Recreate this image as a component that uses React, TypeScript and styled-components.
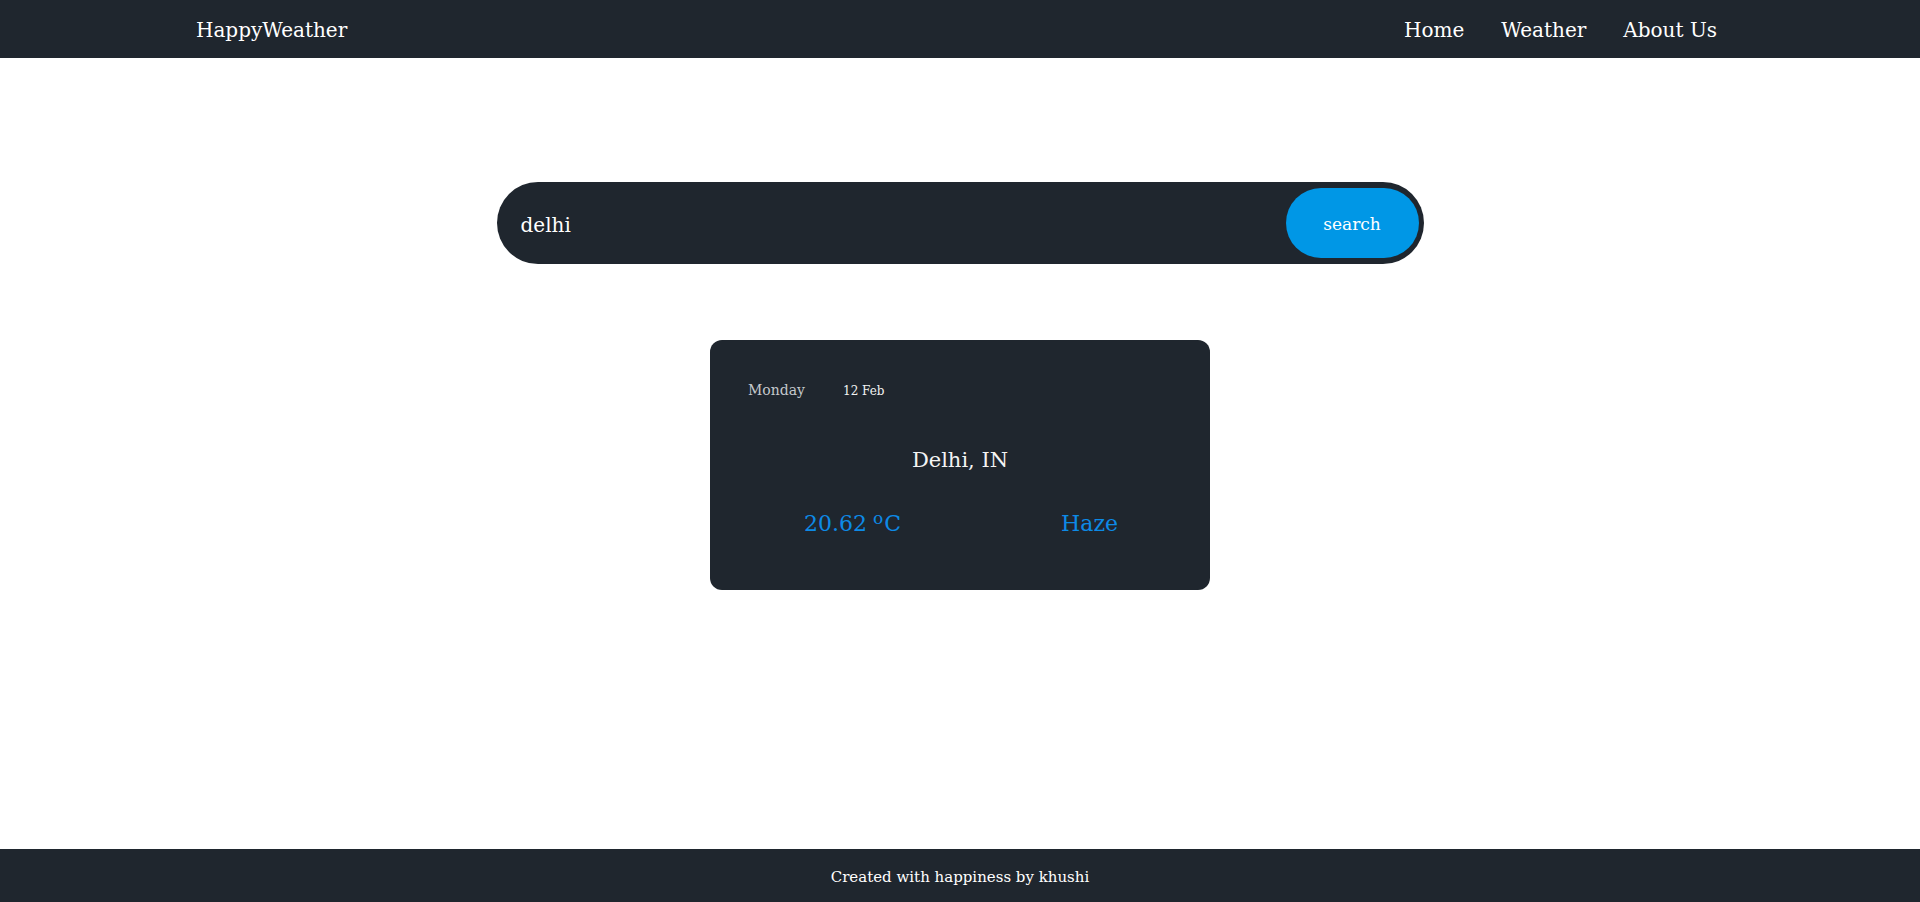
import React from "react";
import styled, { createGlobalStyle } from "styled-components";

const Global = createGlobalStyle`
  html, body { margin: 0; padding: 0; }
  body { font-family: "DejaVu Serif", "Liberation Serif", serif; background: #ffffff; }
  * { box-sizing: border-box; }
`;

const Page = styled.div`
  min-height: 100vh;
  display: flex;
  flex-direction: column;
`;

const Nav = styled.nav`
  height: 58px;
  background: #1f262e;
  display: flex;
  align-items: center;
  justify-content: space-between;
  padding: 2px 203px 0 196px;
  color: #ffffff;
`;

const Brand = styled.div`
  font-size: 20px;
  color: #ffffff;
`;

const Links = styled.div`
  display: flex;
  gap: 37px;
`;

const NavLink = styled.a`
  font-size: 20px;
  color: #ffffff;
  text-decoration: none;
`;

const Main = styled.main`
  flex: 1;
  display: flex;
  flex-direction: column;
  align-items: center;
  padding-top: 124px;
`;

const SearchBar = styled.form`
  width: 927px;
  height: 82px;
  border-radius: 41px;
  background: #1f262e;
  display: flex;
  align-items: center;
  padding: 6px 5px 6px 24px;
`;

const SearchInput = styled.input`
  flex: 1;
  background: transparent;
  border: none;
  outline: none;
  color: #ffffff;
  font-family: inherit;
  font-size: 20px;
  padding: 4px 0 0;
`;

const SearchButton = styled.button`
  width: 133px;
  height: 70px;
  border-radius: 35px;
  border: none;
  background: #0097e6;
  color: #ffffff;
  font-family: inherit;
  font-size: 17px;
  padding-top: 3px;
`;

const Card = styled.section`
  margin-top: 76px;
  width: 500px;
  height: 250px;
  border-radius: 12px;
  background: #1f262e;
  padding: 42px 12px 0;
  display: flex;
  flex-direction: column;
`;

const DateRow = styled.div`
  display: flex;
  align-items: baseline;
  padding-left: 26px;
`;

const Day = styled.span`
  font-size: 14px;
  color: #c4c8cc;
  width: 95px;
`;

const DateText = styled.span`
  font-size: 12px;
  color: #f2f2f2;
`;

const City = styled.div`
  margin-top: 50px;
  text-align: center;
  font-size: 21px;
  color: #f4f4f4;
`;

const StatsRow = styled.div`
  margin-top: 39px;
  display: flex;
  justify-content: space-around;
  padding-left: 2px;
`;

const Stat = styled.span`
  font-size: 22px;
  color: #0d8ae6;
`;

const Deg = styled.sup`
  font-size: 17px;
  vertical-align: 7px;
  margin: 0 1px 0 6px;
  line-height: 0;
`;

const Footer = styled.footer`
  height: 53px;
  background: #1f262e;
  color: #ffffff;
  display: flex;
  align-items: center;
  justify-content: center;
  font-size: 15px;
  padding-top: 2px;
`;

export default function App() {
  return (
    <Page>
      <Global />
      <Nav>
        <Brand>HappyWeather</Brand>
        <Links>
          <NavLink href="#">Home</NavLink>
          <NavLink href="#">Weather</NavLink>
          <NavLink href="#">About Us</NavLink>
        </Links>
      </Nav>
      <Main>
        <SearchBar onSubmit={(e) => e.preventDefault()}>
          <SearchInput defaultValue="delhi" />
          <SearchButton type="submit">search</SearchButton>
        </SearchBar>
        <Card>
          <DateRow>
            <Day>Monday</Day>
            <DateText>12 Feb</DateText>
          </DateRow>
          <City>Delhi, IN</City>
          <StatsRow>
            <Stat>
              20.62<Deg>o</Deg>C
            </Stat>
            <Stat>Haze</Stat>
          </StatsRow>
        </Card>
      </Main>
      <Footer>Created with happiness by khushi</Footer>
    </Page>
  );
}
